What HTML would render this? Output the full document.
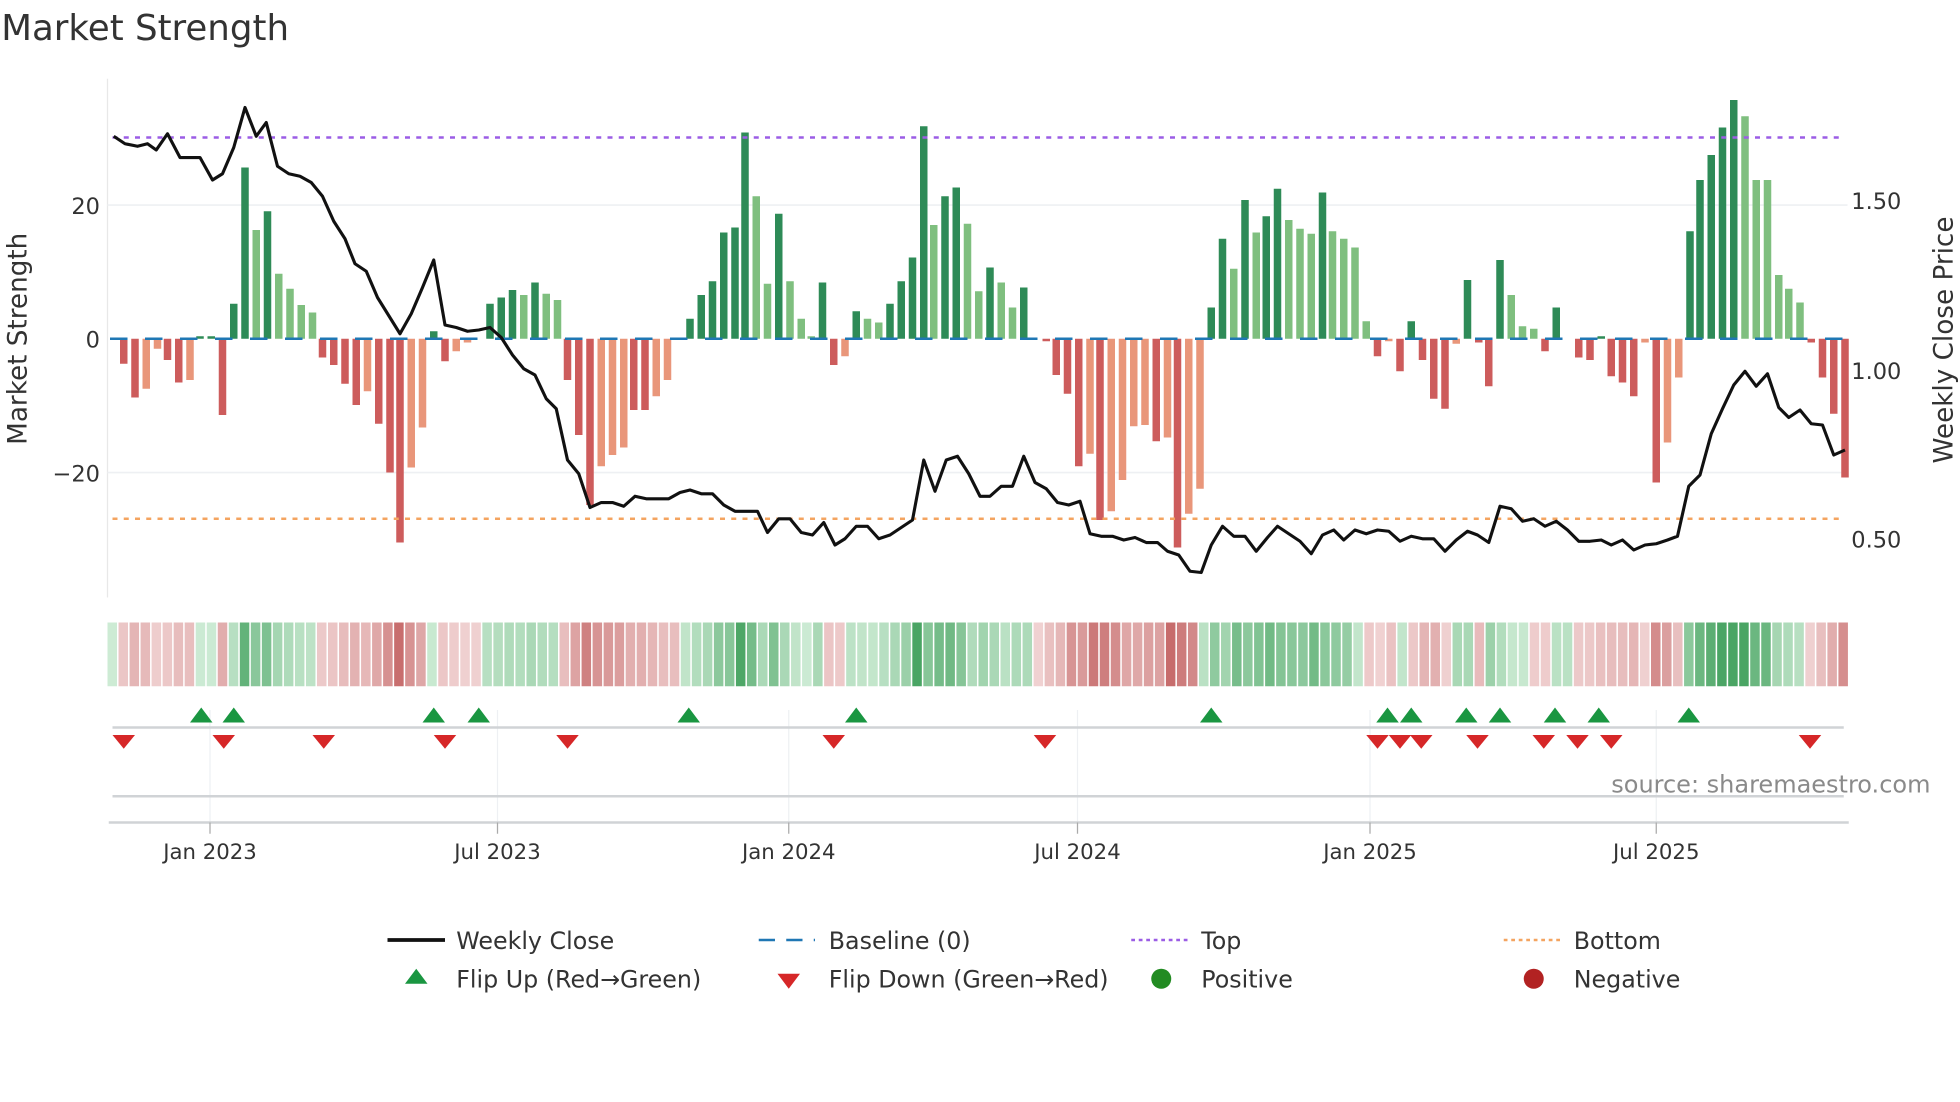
<!DOCTYPE html>
<html><head><meta charset="utf-8"><style>
html,body{margin:0;padding:0;background:#fff;width:1960px;height:1102px;overflow:hidden}
svg{display:block}
text{font-family:"DejaVu Sans","Liberation Sans",sans-serif;fill:#333}
</style></head><body>
<svg id="s" width="1960" height="1102" viewBox="0 0 1568 881.6" xmlns="http://www.w3.org/2000/svg">
<rect width="1568" height="882" fill="#fff"/>
<text x="1" y="32" font-size="28.5">Market Strength</text>
<line x1="86" y1="63" x2="86" y2="478" stroke="#e8e8e8" stroke-width="1"/>
<line x1="86" y1="164" x2="1478" y2="164" stroke="#eef0f3" stroke-width="1.3"/>
<line x1="86" y1="378" x2="1478" y2="378" stroke="#eef0f3" stroke-width="1.3"/>
<text x="80" y="171" font-size="18" text-anchor="end">20</text>
<text x="80" y="278" font-size="18" text-anchor="end">0</text>
<text x="80" y="385" font-size="18" text-anchor="end">−20</text>
<text x="1481" y="167" font-size="18">1.50</text>
<text x="1481" y="303" font-size="18">1.00</text>
<text x="1481" y="438" font-size="18">0.50</text>
<text transform="translate(21,271) rotate(-90)" font-size="21" text-anchor="middle">Market Strength</text>
<text transform="translate(1562,272) rotate(-90)" font-size="21" text-anchor="middle">Weekly Close Price</text>
<g id="bars"></g>
<line x1="88" y1="271" x2="1476" y2="271" stroke="#1f77b4" stroke-width="2" stroke-dasharray="14,14"/>
<line x1="90" y1="110" x2="1476" y2="110" stroke="#9b5de5" stroke-width="2" stroke-dasharray="4,5"/>
<line x1="90" y1="415" x2="1476" y2="415" stroke="#f4a460" stroke-width="2" stroke-dasharray="4,5"/>
<polyline id="price" fill="none" stroke="#111" stroke-width="2.5" stroke-linejoin="round"/>
<g id="heat"></g>
<g stroke="#eef0f3" stroke-width="1">
<line x1="168" y1="568" x2="168" y2="658"/><line x1="398" y1="568" x2="398" y2="658"/><line x1="631" y1="568" x2="631" y2="658"/><line x1="862" y1="568" x2="862" y2="658"/><line x1="1096" y1="568" x2="1096" y2="658"/><line x1="1325" y1="568" x2="1325" y2="658"/>
</g>
<line x1="90" y1="582" x2="1475" y2="582" stroke="#d0d3d6" stroke-width="2"/>
<line x1="90" y1="637" x2="1475" y2="637" stroke="#d0d3d6" stroke-width="2"/>
<line x1="87" y1="658" x2="1479" y2="658" stroke="#d0d3d6" stroke-width="2"/>
<g id="marks"></g>
<g stroke="#aaa" stroke-width="1">
<line x1="168" y1="658" x2="168" y2="667"/><line x1="398" y1="658" x2="398" y2="667"/><line x1="631" y1="658" x2="631" y2="667"/><line x1="862" y1="658" x2="862" y2="667"/><line x1="1096" y1="658" x2="1096" y2="667"/><line x1="1325" y1="658" x2="1325" y2="667"/>
</g>
<g font-size="17" text-anchor="middle">
<text x="168" y="687">Jan 2023</text><text x="398" y="687">Jul 2023</text><text x="631" y="687">Jan 2024</text><text x="862" y="687">Jul 2024</text><text x="1096" y="687">Jan 2025</text><text x="1325" y="687">Jul 2025</text>
</g>
<text x="1289" y="634" font-size="19.2" style="fill:#8a8a8a">source: sharemaestro.com</text>
<g font-size="19">
<line x1="310" y1="752" x2="356" y2="752" stroke="#111" stroke-width="3"/>
<text x="365" y="759">Weekly Close</text>
<line x1="607" y1="752" x2="652" y2="752" stroke="#1f77b4" stroke-width="2" stroke-dasharray="13,9"/>
<text x="663" y="759">Baseline (0)</text>
<line x1="905" y1="752" x2="950" y2="752" stroke="#9b5de5" stroke-width="2" stroke-dasharray="3,3"/>
<text x="961" y="759">Top</text>
<line x1="1203" y1="752" x2="1248" y2="752" stroke="#f4a460" stroke-width="2" stroke-dasharray="3,3"/>
<text x="1259" y="759">Bottom</text>
<polygon points="333,775 324,787 342,787" fill="#1a9641"/>
<text x="365" y="790">Flip Up (Red→Green)</text>
<polygon points="622,779 640,779 631,791" fill="#d62728"/>
<text x="663" y="790">Flip Down (Green→Red)</text>
<circle cx="929" cy="783" r="8" fill="#228b22"/>
<text x="961" y="790">Positive</text>
<circle cx="1227" cy="783" r="8" fill="#b22222"/>
<text x="1259" y="790">Negative</text>
</g>
</svg>
<script>
var B=[[99,-20,'R'],[108,-47,'R'],[117,-40,'r'],[126,-8,'r'],[134,-17,'R'],[143,-35,'R'],[152,-33,'r'],[160,2,'G'],[169,2,'G'],[178,-61,'R'],[187,28,'G'],[196,137,'G'],[205,87,'g'],[214,102,'G'],[223,52,'g'],[232,40,'g'],[241,27,'g'],[250,21,'g'],[258,-15,'R'],[267,-21,'R'],[276,-36,'R'],[285,-53,'R'],[294,-42,'r'],[303,-68,'R'],[312,-107,'R'],[320,-163,'R'],[329,-103,'r'],[338,-71,'r'],[347,6,'G'],[356,-18,'R'],[365,-10,'r'],[374,-3,'r'],[392,28,'G'],[401,33,'G'],[410,39,'G'],[419,35,'g'],[428,45,'G'],[437,36,'g'],[446,31,'g'],[454,-33,'R'],[463,-77,'R'],[472,-133,'R'],[481,-102,'r'],[490,-93,'r'],[499,-87,'r'],[507,-57,'R'],[516,-57,'R'],[525,-46,'r'],[534,-33,'r'],[552,16,'G'],[561,35,'G'],[570,46,'G'],[579,85,'G'],[588,89,'G'],[596,165,'G'],[605,114,'g'],[614,44,'g'],[623,100,'G'],[632,46,'g'],[641,16,'g'],[649,2,'g'],[658,45,'G'],[667,-21,'R'],[676,-14,'r'],[685,22,'G'],[694,16,'g'],[703,13,'g'],[712,28,'G'],[721,46,'G'],[730,65,'G'],[739,170,'G'],[747,91,'g'],[756,114,'G'],[765,121,'G'],[774,92,'g'],[783,38,'g'],[792,57,'G'],[801,45,'g'],[810,25,'g'],[819,41,'G'],[837,-2,'R'],[845,-29,'R'],[854,-44,'R'],[863,-102,'R'],[872,-92,'r'],[880,-145,'R'],[889,-138,'r'],[898,-113,'r'],[907,-70,'r'],[916,-69,'r'],[925,-82,'R'],[934,-79,'r'],[942,-167,'R'],[951,-140,'r'],[960,-120,'r'],[969,25,'G'],[978,80,'G'],[987,56,'g'],[996,111,'G'],[1005,85,'g'],[1013,98,'G'],[1022,120,'G'],[1031,95,'g'],[1040,88,'g'],[1049,84,'g'],[1058,117,'G'],[1066,86,'g'],[1075,80,'g'],[1084,73,'g'],[1093,14,'g'],[1102,-14,'R'],[1111,-2,'r'],[1120,-26,'R'],[1129,14,'G'],[1138,-17,'R'],[1147,-48,'R'],[1156,-56,'R'],[1165,-4,'r'],[1174,47,'G'],[1183,-3,'R'],[1191,-38,'R'],[1200,63,'G'],[1209,35,'g'],[1218,10,'g'],[1227,8,'g'],[1236,-10,'R'],[1245,25,'G'],[1263,-15,'R'],[1272,-17,'R'],[1281,2,'G'],[1289,-30,'R'],[1298,-35,'R'],[1307,-46,'R'],[1316,-3,'r'],[1325,-115,'R'],[1334,-83,'r'],[1343,-31,'r'],[1352,86,'G'],[1360,127,'G'],[1369,147,'G'],[1378,169,'G'],[1387,191,'G'],[1396,178,'g'],[1405,127,'g'],[1414,127,'g'],[1423,51,'g'],[1431,40,'g'],[1440,29,'g'],[1449,-3,'R'],[1458,-31,'R'],[1467,-60,'R'],[1476,-111,'R']];
var C={G:'#2e8b57',g:'#7fbf7f',R:'#cd5c5c',r:'#e9967a'};
var NS='http://www.w3.org/2000/svg';
function el(t,a,p){var e=document.createElementNS(NS,t);for(var k in a)e.setAttribute(k,a[k]);document.getElementById(p).appendChild(e);return e;}
B.forEach(function(b){var h=b[1];el('rect',{x:b[0]-3,y:h>0?271-h:271,width:6,height:Math.abs(h),fill:C[b[2]]},'bars');});
var hm={};B.forEach(function(b){hm[Math.round((b[0]-90)/8.85)]=b[1];});
var last=0;
for(var i=0;i<158;i++){var x=86+i*8.82;if(x>1479)break;var v=(i in hm)?hm[i]:last;last=v;
var a=Math.min(1,Math.abs(v)/170);var col;
if(v>=0){var r=Math.round(205-(205-74)*a),g=Math.round(235-(235-165)*a),bb=Math.round(212-(212-100)*a);col='rgb('+r+','+g+','+bb+')';}
else{var r2=Math.round(240-(240-198)*a),g2=Math.round(210-(210-106)*a),b2=Math.round(210-(210-106)*a);col='rgb('+r2+','+g2+','+b2+')';}
el('rect',{x:x,y:498,width:Math.min(7.6,1479-x),height:51,fill:col},'heat');}
var P="91,109 100,115 110,117 118,115 125,120 134,107 144,126 160,126 170,144 178,139 187,118 196,86 205,109 213,98 222,133 231,139 240,141 249,146 258,157 267,177 276,191 284,211 293,217 302,238 320,267 329,251 338,230 347,208 356,260 365,262 374,265 383,264 392,262 401,270 410,284 419,295 428,300 437,319 445,327 454,368 463,379 472,406 481,402 490,402 499,405 508,397 517,399 526,399 535,399 544,394 552,392 561,395 570,395 579,404 588,409 597,409 606,409 614,426 623,415 632,415 641,426 650,428 659,418 668,436 676,431 685,421 694,421 703,431 712,428 721,422 730,416 739,368 748,393 757,368 766,365 775,379 784,397 792,397 801,389 810,389 819,365 828,386 837,391 846,402 855,404 864,401 872,427 881,429 890,429 899,432 908,430 917,434 926,434 934,441 943,444 952,457 961,458 969,436 978,421 987,429 996,429 1005,441 1014,430 1022,421 1031,427 1040,433 1049,443 1058,428 1067,424 1075,432 1084,424 1093,427 1102,424 1111,425 1120,433 1129,429 1138,431 1147,431 1156,441 1165,432 1174,425 1182,428 1191,434 1200,405 1209,407 1218,417 1227,415 1236,421 1245,417 1254,424 1263,433 1272,433 1281,432 1289,436 1298,432 1307,440 1316,436 1325,435 1334,432 1342,429 1351,389 1360,380 1369,347 1378,327 1387,308 1396,297 1405,309 1414,299 1423,326 1431,334 1440,328 1449,339 1458,340 1467,364 1476,360";
document.getElementById('price').setAttribute('points',P);
[161,187,347,383,551,685,969,1110,1129,1173,1200,1244,1279,1351].forEach(function(x){el('polygon',{points:x+',566 '+(x-9)+',578 '+(x+9)+',578',fill:'#1a9641'},'marks');});
[99,179,259,356,454,667,836,1102,1120,1137,1182,1235,1262,1289,1448].forEach(function(x){el('polygon',{points:(x-9)+',588 '+(x+9)+',588 '+x+',599',fill:'#d62728'},'marks');});
</script>
</body></html>
